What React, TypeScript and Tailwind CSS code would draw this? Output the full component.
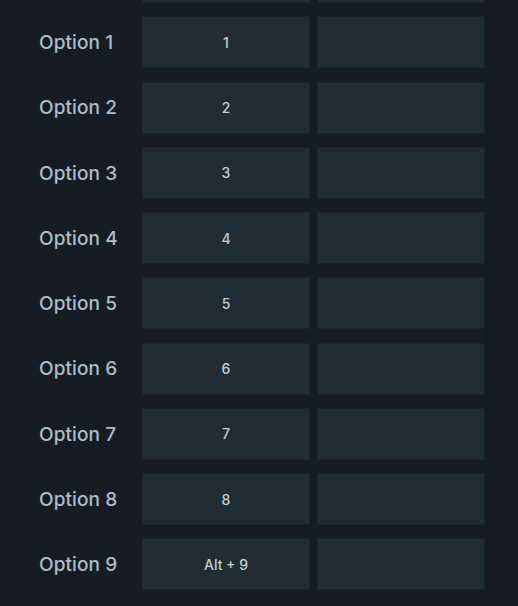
import React from "react";

const rows = [
  { label: "Option 1", key: "1" },
  { label: "Option 2", key: "2" },
  { label: "Option 3", key: "3" },
  { label: "Option 4", key: "4" },
  { label: "Option 5", key: "5" },
  { label: "Option 6", key: "6" },
  { label: "Option 7", key: "7" },
  { label: "Option 8", key: "8" },
  { label: "Option 9", key: "Alt + 9" },
];

export default function App() {
  return (
    <div
      className="w-[518px] h-[606px] overflow-hidden bg-[#161c21] flex"
      style={{ fontFamily: "Inter, 'Noto Sans', sans-serif" }}
    >
      <div className="w-[486px] flex flex-col gap-[13.25px]">
        <div className="flex h-[3px]">
          <div className="w-[142px]" />
          <div className="w-[168px] bg-[#212d35] border-x border-b border-[#1b242b]" />
          <div className="w-[7px]" />
          <div className="w-[168px] bg-[#212d35] border-x border-b border-[#1b242b]" />
        </div>
        {rows.map((r) => (
          <div key={r.label} className="flex h-[52px] items-center">
            <div className="w-[142px] pl-[39px] pt-[2px] text-[19px] font-medium text-[#aebdc5] tracking-[0.1px]">
              {r.label}
            </div>
            <div className="w-[168px] h-full bg-[#212d35] border border-[#1b242b] flex items-center justify-center text-[14px] font-medium text-[#c3cfd5]">
              {r.key}
            </div>
            <div className="w-[7px]" />
            <div className="w-[168px] h-full bg-[#212d35] border border-[#1b242b]" />
          </div>
        ))}
      </div>
      <div className="flex-1 bg-[#151b20]" />
    </div>
  );
}
